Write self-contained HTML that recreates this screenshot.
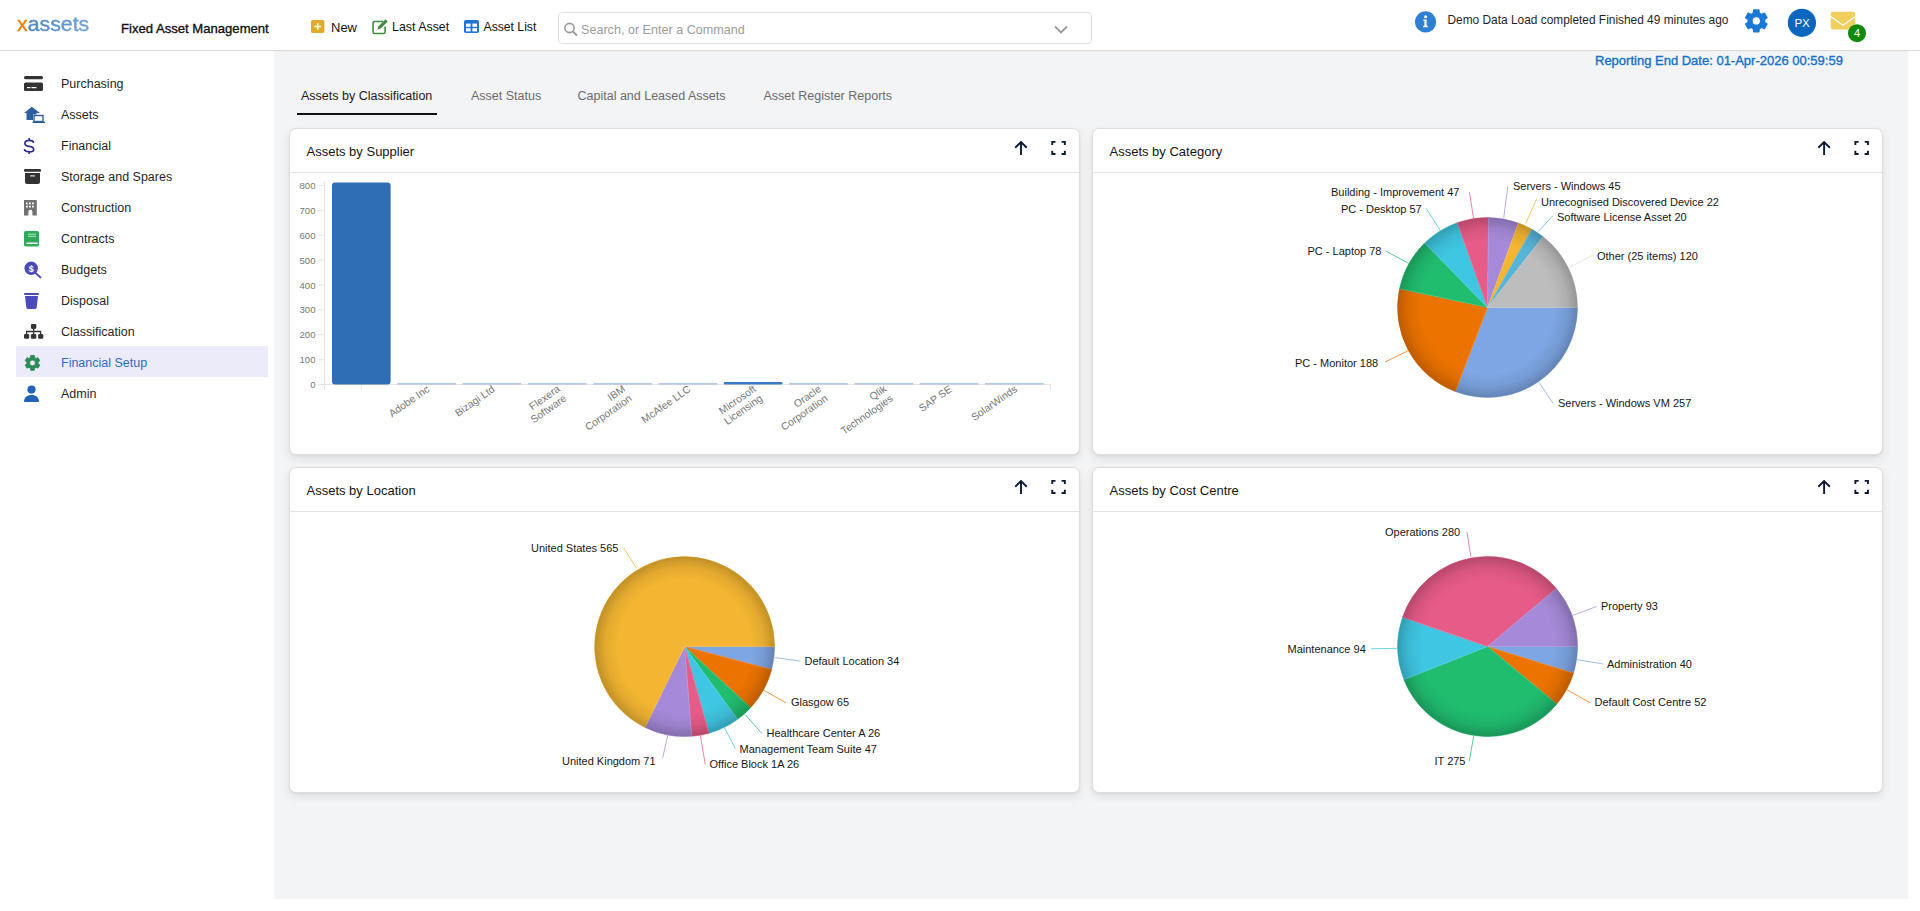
<!DOCTYPE html>
<html><head><meta charset="utf-8">
<style>
html,body{margin:0;padding:0;}
body{width:1920px;height:911px;overflow:hidden;position:relative;background:#fff;font-family:"Liberation Sans", sans-serif;}
.abs{position:absolute;white-space:nowrap;}
#hdr{position:absolute;left:0;top:0;width:1920px;height:50px;background:#fff;border-bottom:1px solid #dfdcd9;box-shadow:0 1px 1px rgba(0,0,0,0.02);z-index:2;}
#main{position:absolute;left:274px;top:51px;width:1634px;height:848px;background:#f3f4f6;}
.si{position:absolute;left:61px;height:20px;line-height:20px;font-size:12.5px;white-space:nowrap;}
.hl{position:absolute;left:16px;top:346px;width:252px;height:31px;background:#ecebfa;}
.panel{position:absolute;width:791px;background:#fff;border:1px solid #e0dedb;border-radius:7px;box-shadow:0 4px 10px rgba(0,0,0,0.09),0 1px 2px rgba(0,0,0,0.05);box-sizing:border-box;}
.ptitle{position:absolute;left:16.5px;top:14.5px;font-size:13px;color:#141414;white-space:nowrap;}
.psep{position:absolute;left:0;right:0;top:43px;height:1px;background:#e4e4e4;}
.tab{position:absolute;top:89px;font-size:12.5px;color:#6b6b6b;white-space:nowrap;}
svg text{font-family:"Liberation Sans", sans-serif;}
</style></head><body>
<div id="hdr">
 <div class="abs" style="left:16.5px;top:13px;font-size:20.2px;letter-spacing:0;transform:scaleX(1.055);transform-origin:0 0;"><span style="color:#ef7d00;-webkit-text-stroke:0.3px #ef7d00;">x</span><span style="background:linear-gradient(90deg,#4a84bd,#74a4e4);-webkit-background-clip:text;background-clip:text;color:transparent;-webkit-text-stroke:0.3px rgba(95,145,205,0.55);">assets</span></div>
 <div class="abs" style="left:121px;top:20.8px;font-size:13.1px;color:#111;-webkit-text-stroke:0.35px #111;">Fixed Asset Management</div>
 <div class="abs" style="left:331px;top:20px;font-size:13px;color:#111;">New</div>
 <div class="abs" style="left:392px;top:20px;font-size:12.4px;color:#111;">Last Asset</div>
 <div class="abs" style="left:483.5px;top:20px;font-size:12.2px;color:#111;">Asset List</div>
 <div class="abs" style="left:558px;top:12px;width:534px;height:32px;box-sizing:border-box;border:1px solid #dedede;border-radius:4px;"></div>
 <div class="abs" style="left:581px;top:23px;font-size:12.6px;color:#9c9c9c;">Search, or Enter a Command</div>
 <div class="abs" style="left:1447.5px;top:12.5px;font-size:11.9px;color:#1f1f1f;">Demo Data Load completed Finished 49 minutes ago</div>
</div>
<div id="main"></div>
<div class="hl"></div>
<div class="si" style="top:74px;color:#1f1f1f">Purchasing</div><div class="si" style="top:105px;color:#1f1f1f">Assets</div><div class="si" style="top:136px;color:#1f1f1f">Financial</div><div class="si" style="top:167px;color:#1f1f1f">Storage and Spares</div><div class="si" style="top:198px;color:#1f1f1f">Construction</div><div class="si" style="top:229px;color:#1f1f1f">Contracts</div><div class="si" style="top:260px;color:#1f1f1f">Budgets</div><div class="si" style="top:291px;color:#1f1f1f">Disposal</div><div class="si" style="top:322px;color:#1f1f1f">Classification</div><div class="si" style="top:353px;color:#2a6cc4">Financial Setup</div><div class="si" style="top:384px;color:#1f1f1f">Admin</div>
<div class="abs" style="left:1595px;top:53px;font-size:13px;color:#1170c8;-webkit-text-stroke:0.35px #1170c8;">Reporting End Date: 01-Apr-2026 00:59:59</div>
<div class="tab" style="left:301px;color:#1a1a1a;">Assets by Classification</div>
<div class="abs" style="left:297px;top:113px;width:140px;height:2px;background:#111;"></div>
<div class="tab" style="left:471px;">Asset Status</div>
<div class="tab" style="left:577.5px;">Capital and Leased Assets</div>
<div class="tab" style="left:763.5px;">Asset Register Reports</div>

<div class="panel" style="left:289px;top:128px;height:327px;"><div class="ptitle">Assets by Supplier</div><div class="psep"></div></div>
<div class="panel" style="left:1092px;top:128px;height:327px;"><div class="ptitle">Assets by Category</div><div class="psep"></div></div>
<div class="panel" style="left:289px;top:467px;height:326px;"><div class="ptitle">Assets by Location</div><div class="psep"></div></div>
<div class="panel" style="left:1092px;top:467px;height:326px;"><div class="ptitle">Assets by Cost Centre</div><div class="psep"></div></div>

<svg class="abs" style="left:0;top:0;z-index:3;" width="1920" height="911" viewBox="0 0 1920 911">
<rect x="24" y="76" width="19" height="3.2" rx="1.5" fill="#333"/><rect x="24" y="82.4" width="19" height="8.5" rx="1.5" fill="#333"/><rect x="27" y="87" width="3.5" height="1.2" fill="#fff"/><rect x="31.5" y="87" width="5" height="1.2" fill="#fff"/>
<path d="M24.1,113 L31.8,106.8 L39.9,113 L36.5,113 L36.5,114.5 L33,114.5 L33,120 L26.5,120 L26.5,113 Z" fill="#2c5ea0"/><rect x="34" y="115.5" width="9" height="6" fill="none" stroke="#2c5ea0" stroke-width="1.4"/><rect x="32.5" y="121.5" width="12.5" height="1.6" rx="0.6" fill="#2c5ea0"/>
<path d="M29.2,138 V140.6 M29.2,151.6 V154 M33.6,142.8 C33.4,141.2 31.6,140.4 29.2,140.4 C26.5,140.4 24.9,141.6 24.9,143.4 C24.9,145.3 26.7,145.9 29.2,146.3 C31.9,146.7 33.7,147.5 33.7,149.4 C33.7,151 32,151.8 29.2,151.8 C26.6,151.8 24.7,151 24.4,149.2" fill="none" stroke="#2b2b8e" stroke-width="1.7"/>
<rect x="24" y="169" width="17" height="2.8" rx="1" fill="#333"/><path d="M25,173 h15 v9 a2,2 0 0 1 -2,2 h-11 a2,2 0 0 1 -2,-2 z" fill="#333"/><rect x="30" y="175.3" width="5" height="1.2" rx="0.5" fill="#ddd"/>
<path d="M24,200 h12.8 v15.4 h-4.4 v-3.6 a2,2 0 0 0 -4,0 v3.6 h-4.4 z" fill="#717171"/><rect x="26" y="202.5" width="1.8" height="1.8" fill="#fff"/><rect x="26" y="205.7" width="1.8" height="1.8" fill="#fff"/><rect x="29" y="202.5" width="1.8" height="1.8" fill="#fff"/><rect x="29" y="205.7" width="1.8" height="1.8" fill="#fff"/><rect x="32" y="202.5" width="1.8" height="1.8" fill="#fff"/><rect x="32" y="205.7" width="1.8" height="1.8" fill="#fff"/>
<rect x="24" y="231" width="15" height="15.5" rx="1.8" fill="#2eaa5a"/><rect x="26.3" y="242.6" width="11.5" height="1.5" rx="0.7" fill="#fff"/><rect x="28" y="233.6" width="8" height="1.1" fill="#a8e0bc"/><rect x="28" y="235.8" width="8" height="1.1" fill="#a8e0bc"/>
<circle cx="31.2" cy="268.3" r="6.7" fill="#4b4bb8"/><line x1="35.5" y1="273" x2="40.5" y2="277.5" stroke="#4b4bb8" stroke-width="1.8" stroke-linecap="round"/><text x="31.2" y="271.5" font-size="9" font-weight="bold" fill="#fff" text-anchor="middle">$</text>
<rect x="24" y="292.9" width="15" height="2" rx="0.8" fill="#4b4bbd"/><path d="M25,296 h13 l-1.3,11.5 a1.6,1.6 0 0 1 -1.6,1.4 h-7.2 a1.6,1.6 0 0 1 -1.6,-1.4 z" fill="#4b4bbd"/>
<rect x="30.9" y="323.9" width="5.4" height="5" rx="1.3" fill="#333"/><path d="M33.6,328.5 v5.5 M26.6,334.5 v-3 h14 v3" stroke="#333" stroke-width="1.3" fill="none"/><rect x="24" y="334" width="5.2" height="4.8" rx="1.3" fill="#333"/><rect x="30.9" y="334" width="5.4" height="4.8" rx="1.3" fill="#333"/><rect x="38.1" y="334" width="5.2" height="4.8" rx="1.3" fill="#333"/>
<path d="M30.49,357.57 L30.69,355.52 L34.31,355.52 L34.51,357.57 L36.12,358.49 L37.99,357.64 L39.80,360.77 L38.12,361.97 L38.12,363.83 L39.80,365.03 L37.99,368.16 L36.12,367.31 L34.51,368.23 L34.31,370.28 L30.69,370.28 L30.49,368.23 L28.88,367.31 L27.01,368.16 L25.20,365.03 L26.88,363.83 L26.88,361.97 L25.20,360.77 L27.01,357.64 L28.88,358.49 Z M35.4,362.9 A2.9,2.9 0 1 0 29.6,362.9 A2.9,2.9 0 1 0 35.4,362.9 Z" fill="#2e8b57" stroke="#2e8b57" stroke-width="0.91" stroke-linejoin="round" fill-rule="evenodd"/>
<circle cx="31.5" cy="389.6" r="4.1" fill="#2463b8"/><path d="M24,402 C24,397.5 27,395 31.5,395 C36,395 39,397.5 39,402 z" fill="#2463b8"/>
<circle cx="1425.6" cy="21.9" r="10.6" fill="#2f80d2"/><circle cx="1425.6" cy="16.8" r="1.5" fill="#fff"/><path d="M1423.4,19.5 h3.2 v6.3 h1.2 v1.5 h-4.6 v-1.5 h1.2 v-4.8 h-1 z" fill="#fff"/><path d="M1753.38,13.13 L1753.64,10.02 L1758.96,10.02 L1759.22,13.13 L1761.57,14.48 L1764.39,13.15 L1767.05,17.77 L1764.49,19.55 L1764.49,22.25 L1767.05,24.03 L1764.39,28.65 L1761.57,27.32 L1759.22,28.67 L1758.96,31.78 L1753.64,31.78 L1753.38,28.67 L1751.03,27.32 L1748.21,28.65 L1745.55,24.03 L1748.11,22.25 L1748.11,19.55 L1745.55,17.77 L1748.21,13.15 L1751.03,14.48 Z M1760.6,20.9 A4.3,4.3 0 1 0 1752.0,20.9 A4.3,4.3 0 1 0 1760.6,20.9 Z" fill="#1b79d6" stroke="#1b79d6" stroke-width="1.34" stroke-linejoin="round" fill-rule="evenodd"/><circle cx="1801.9" cy="22.8" r="14.1" fill="#0a66bf"/><text x="1802" y="27.2" font-size="11.6" fill="#fff" text-anchor="middle" letter-spacing="-0.3">PX</text><path d="M1833,11.8 h20 a2.2,2.2 0 0 1 2.2,2.2 v13.3 a2.2,2.2 0 0 1 -2.2,2.2 h-20 a2.2,2.2 0 0 1 -2.2,-2.2 v-13.3 a2.2,2.2 0 0 1 2.2,-2.2 z" fill="#f0cf5e"/><path d="M1831,16.8 L1843,25.2 L1855,16.8" fill="none" stroke="#fff" stroke-width="1.3"/><circle cx="1857" cy="33.2" r="9" fill="#118a0b"/><text x="1857" y="37.3" font-size="11" fill="#fff" text-anchor="middle">4</text><rect x="311" y="20" width="13.4" height="13" rx="1.8" fill="#e2a92e"/><path d="M317.7,23.3 v6.4 M314.5,26.5 h6.4" stroke="#fff" stroke-width="1.5"/><path d="M383,21.5 h-8.3 a1.6,1.6 0 0 0 -1.6,1.6 v8.8 a1.6,1.6 0 0 0 1.6,1.6 h8.8 a1.6,1.6 0 0 0 1.6,-1.6 v-5.5" fill="none" stroke="#3f8c3f" stroke-width="1.6"/><path d="M377.5,29.5 l1,-3.2 l7,-7 l2.2,2.2 l-7,7 z" fill="#3f8c3f"/><rect x="464" y="20" width="15" height="13" rx="1.8" fill="#1f74d8"/><rect x="466" y="23.6" width="4.6" height="3.2" fill="#fff"/><rect x="472.4" y="23.6" width="4.6" height="3.2" fill="#fff"/><rect x="466" y="28.2" width="4.6" height="3.2" fill="#fff"/><rect x="472.4" y="28.2" width="4.6" height="3.2" fill="#fff"/><circle cx="569.5" cy="28" r="4.6" fill="none" stroke="#9a9a9a" stroke-width="1.6"/><line x1="572.8" y1="31.3" x2="577" y2="35.5" stroke="#9a9a9a" stroke-width="1.8"/><path d="M1055,26.5 L1061,32.5 L1067,26.5" fill="none" stroke="#9a9a9a" stroke-width="1.8"/>
<path d="M1015.2,147.70000000000002 L1021.0,142.1 L1026.8,147.70000000000002 M1021.0,142.4 V154.9" fill="none" stroke="#0b1a33" stroke-width="1.9"/><path d="M1052.25,145.1 V141.85 H1055.5 M1061.6,141.85 H1064.85 V145.1 M1064.85,150.70000000000002 V153.95000000000002 H1061.6 M1055.5,153.95000000000002 H1052.25 V150.70000000000002" fill="none" stroke="#0b1a33" stroke-width="1.9"/><path d="M1818.3000000000002,147.70000000000002 L1824.1000000000001,142.1 L1829.9,147.70000000000002 M1824.1000000000001,142.4 V154.9" fill="none" stroke="#0b1a33" stroke-width="1.9"/><path d="M1855.3500000000001,145.1 V141.85 H1858.6000000000001 M1864.7,141.85 H1867.95 V145.1 M1867.95,150.70000000000002 V153.95000000000002 H1864.7 M1858.6000000000001,153.95000000000002 H1855.3500000000001 V150.70000000000002" fill="none" stroke="#0b1a33" stroke-width="1.9"/><path d="M1015.2,486.7 L1021.0,481.09999999999997 L1026.8,486.7 M1021.0,481.4 V493.9" fill="none" stroke="#0b1a33" stroke-width="1.9"/><path d="M1052.25,484.09999999999997 V480.84999999999997 H1055.5 M1061.6,480.84999999999997 H1064.85 V484.09999999999997 M1064.85,489.7 V492.95 H1061.6 M1055.5,492.95 H1052.25 V489.7" fill="none" stroke="#0b1a33" stroke-width="1.9"/><path d="M1818.3000000000002,486.7 L1824.1000000000001,481.09999999999997 L1829.9,486.7 M1824.1000000000001,481.4 V493.9" fill="none" stroke="#0b1a33" stroke-width="1.9"/><path d="M1855.3500000000001,484.09999999999997 V480.84999999999997 H1858.6000000000001 M1864.7,480.84999999999997 H1867.95 V484.09999999999997 M1867.95,489.7 V492.95 H1864.7 M1858.6000000000001,492.95 H1855.3500000000001 V489.7" fill="none" stroke="#0b1a33" stroke-width="1.9"/>
<defs>
<radialGradient id="shade" cx="0.5" cy="0.5" r="0.5">
 <stop offset="0.74" stop-color="#000" stop-opacity="0"/>
 <stop offset="0.88" stop-color="#000" stop-opacity="0.07"/>
 <stop offset="1" stop-color="#000" stop-opacity="0.21"/>
</radialGradient>
</defs>
<path d="M1487.50,307.50 L1577.50,307.50 A90,90 0 0 1 1455.34,391.56 Z" fill="#7ea6e4" stroke="#7ea6e4" stroke-width="0.6"/>
<path d="M1487.50,307.50 L1455.34,391.56 A90,90 0 0 1 1399.50,288.66 Z" fill="#ec7300" stroke="#ec7300" stroke-width="0.6"/>
<path d="M1487.50,307.50 L1399.50,288.66 A90,90 0 0 1 1424.70,243.03 Z" fill="#20bd6f" stroke="#20bd6f" stroke-width="0.6"/>
<path d="M1487.50,307.50 L1424.70,243.03 A90,90 0 0 1 1457.25,222.74 Z" fill="#3fc6e2" stroke="#3fc6e2" stroke-width="0.6"/>
<path d="M1487.50,307.50 L1457.25,222.74 A90,90 0 0 1 1488.52,217.51 Z" fill="#e65b87" stroke="#e65b87" stroke-width="0.6"/>
<path d="M1487.50,307.50 L1488.52,217.51 A90,90 0 0 1 1518.39,222.97 Z" fill="#a68ad9" stroke="#a68ad9" stroke-width="0.6"/>
<path d="M1487.50,307.50 L1518.39,222.97 A90,90 0 0 1 1531.91,229.22 Z" fill="#f4b632" stroke="#f4b632" stroke-width="0.6"/>
<path d="M1487.50,307.50 L1531.91,229.22 A90,90 0 0 1 1543.16,236.77 Z" fill="#58b5d9" stroke="#58b5d9" stroke-width="0.6"/>
<path d="M1487.50,307.50 L1543.16,236.77 A90,90 0 0 1 1577.50,307.50 Z" fill="#bdbdbd" stroke="#bdbdbd" stroke-width="0.6"/>
<circle cx="1487.5" cy="307.5" r="90" fill="url(#shade)"/>
<line x1="1487.5" y1="307.5" x2="1577.50" y2="307.50" stroke="rgba(255,255,255,0.18)" stroke-width="0.7"/>
<line x1="1487.5" y1="307.5" x2="1455.34" y2="391.56" stroke="rgba(255,255,255,0.18)" stroke-width="0.7"/>
<line x1="1487.5" y1="307.5" x2="1399.50" y2="288.66" stroke="rgba(255,255,255,0.18)" stroke-width="0.7"/>
<line x1="1487.5" y1="307.5" x2="1424.70" y2="243.03" stroke="rgba(255,255,255,0.18)" stroke-width="0.7"/>
<line x1="1487.5" y1="307.5" x2="1457.25" y2="222.74" stroke="rgba(255,255,255,0.18)" stroke-width="0.7"/>
<line x1="1487.5" y1="307.5" x2="1488.52" y2="217.51" stroke="rgba(255,255,255,0.18)" stroke-width="0.7"/>
<line x1="1487.5" y1="307.5" x2="1518.39" y2="222.97" stroke="rgba(255,255,255,0.18)" stroke-width="0.7"/>
<line x1="1487.5" y1="307.5" x2="1531.91" y2="229.22" stroke="rgba(255,255,255,0.18)" stroke-width="0.7"/>
<line x1="1487.5" y1="307.5" x2="1543.16" y2="236.77" stroke="rgba(255,255,255,0.18)" stroke-width="0.7"/>
<line x1="1469.4" y1="192" x2="1473.5" y2="218" stroke="#e65b87" stroke-opacity="0.75" stroke-width="1"/>
<text x="1331" y="192" font-size="11" fill="#161616" text-anchor="start" dominant-baseline="central">Building - Improvement 47</text>
<line x1="1507.8" y1="186.5" x2="1503.7" y2="218" stroke="#a68ad9" stroke-opacity="0.75" stroke-width="1"/>
<text x="1513" y="186" font-size="11" fill="#161616" text-anchor="start" dominant-baseline="central">Servers - Windows 45</text>
<line x1="1536.7" y1="198.8" x2="1525.7" y2="223.5" stroke="#f4b632" stroke-opacity="0.75" stroke-width="1"/>
<text x="1541" y="202" font-size="11" fill="#161616" text-anchor="start" dominant-baseline="central">Unrecognised Discovered Device 22</text>
<line x1="1552.6" y1="216" x2="1538" y2="231.8" stroke="#58b5d9" stroke-opacity="0.75" stroke-width="1"/>
<text x="1557" y="217" font-size="11" fill="#161616" text-anchor="start" dominant-baseline="central">Software License Asset 20</text>
<line x1="1593" y1="255" x2="1569.6" y2="267.4" stroke="#e6e6e6" stroke-width="1"/>
<text x="1597" y="256" font-size="11" fill="#161616" text-anchor="start" dominant-baseline="central">Other (25 items) 120</text>
<line x1="1426.3" y1="208.4" x2="1440.6" y2="231" stroke="#3fc6e2" stroke-opacity="0.75" stroke-width="1"/>
<text x="1341" y="209" font-size="11" fill="#161616" text-anchor="start" dominant-baseline="central">PC - Desktop 57</text>
<line x1="1385.7" y1="251" x2="1408.5" y2="263.3" stroke="#20bd6f" stroke-opacity="0.75" stroke-width="1"/>
<text x="1307.5" y="251" font-size="11" fill="#161616" text-anchor="start" dominant-baseline="central">PC - Laptop 78</text>
<line x1="1385" y1="362" x2="1408.5" y2="350.6" stroke="#ec7300" stroke-opacity="0.75" stroke-width="1"/>
<text x="1295" y="363" font-size="11" fill="#161616" text-anchor="start" dominant-baseline="central">PC - Monitor 188</text>
<line x1="1553" y1="403.3" x2="1539.4" y2="382.7" stroke="#7ea6e4" stroke-opacity="0.75" stroke-width="1"/>
<text x="1558" y="403" font-size="11" fill="#161616" text-anchor="start" dominant-baseline="central">Servers - Windows VM 257</text>
<path d="M684.60,646.60 L774.60,646.60 A90,90 0 0 1 771.66,669.40 Z" fill="#7ea6e4" stroke="#7ea6e4" stroke-width="0.6"/>
<path d="M684.60,646.60 L771.66,669.40 A90,90 0 0 1 750.71,707.67 Z" fill="#ec7300" stroke="#ec7300" stroke-width="0.6"/>
<path d="M684.60,646.60 L750.71,707.67 A90,90 0 0 1 737.56,719.37 Z" fill="#20bd6f" stroke="#20bd6f" stroke-width="0.6"/>
<path d="M684.60,646.60 L737.56,719.37 A90,90 0 0 1 709.04,733.22 Z" fill="#3fc6e2" stroke="#3fc6e2" stroke-width="0.6"/>
<path d="M684.60,646.60 L709.04,733.22 A90,90 0 0 1 691.71,736.32 Z" fill="#e65b87" stroke="#e65b87" stroke-width="0.6"/>
<path d="M684.60,646.60 L691.71,736.32 A90,90 0 0 1 644.98,727.41 Z" fill="#a68ad9" stroke="#a68ad9" stroke-width="0.6"/>
<path d="M684.60,646.60 L644.98,727.41 A90,90 0 1 1 774.60,646.60 Z" fill="#f4b632" stroke="#f4b632" stroke-width="0.6"/>
<circle cx="684.6" cy="646.6" r="90" fill="url(#shade)"/>
<line x1="684.6" y1="646.6" x2="774.60" y2="646.60" stroke="rgba(255,255,255,0.18)" stroke-width="0.7"/>
<line x1="684.6" y1="646.6" x2="771.66" y2="669.40" stroke="rgba(255,255,255,0.18)" stroke-width="0.7"/>
<line x1="684.6" y1="646.6" x2="750.71" y2="707.67" stroke="rgba(255,255,255,0.18)" stroke-width="0.7"/>
<line x1="684.6" y1="646.6" x2="737.56" y2="719.37" stroke="rgba(255,255,255,0.18)" stroke-width="0.7"/>
<line x1="684.6" y1="646.6" x2="709.04" y2="733.22" stroke="rgba(255,255,255,0.18)" stroke-width="0.7"/>
<line x1="684.6" y1="646.6" x2="691.71" y2="736.32" stroke="rgba(255,255,255,0.18)" stroke-width="0.7"/>
<line x1="684.6" y1="646.6" x2="644.98" y2="727.41" stroke="rgba(255,255,255,0.18)" stroke-width="0.7"/>
<line x1="623.7" y1="547.8" x2="636.6" y2="568.4" stroke="#f4b632" stroke-opacity="0.75" stroke-width="1"/>
<text x="531" y="548" font-size="11" fill="#161616" text-anchor="start" dominant-baseline="central">United States 565</text>
<line x1="775" y1="657.6" x2="800" y2="661" stroke="#7ea6e4" stroke-opacity="0.75" stroke-width="1"/>
<text x="804.5" y="661" font-size="11" fill="#161616" text-anchor="start" dominant-baseline="central">Default Location 34</text>
<line x1="764.2" y1="690.5" x2="786" y2="702.8" stroke="#ec7300" stroke-opacity="0.75" stroke-width="1"/>
<text x="791" y="702" font-size="11" fill="#161616" text-anchor="start" dominant-baseline="central">Glasgow 65</text>
<line x1="745" y1="714.4" x2="762" y2="733.6" stroke="#20bd6f" stroke-opacity="0.75" stroke-width="1"/>
<text x="766.5" y="733" font-size="11" fill="#161616" text-anchor="start" dominant-baseline="central">Healthcare Center A 26</text>
<line x1="724.4" y1="727.5" x2="735.4" y2="748.7" stroke="#3fc6e2" stroke-opacity="0.75" stroke-width="1"/>
<text x="739.5" y="749" font-size="11" fill="#161616" text-anchor="start" dominant-baseline="central">Management Team Suite 47</text>
<line x1="700.2" y1="734.4" x2="705.2" y2="764" stroke="#e65b87" stroke-opacity="0.75" stroke-width="1"/>
<text x="709.5" y="764" font-size="11" fill="#161616" text-anchor="start" dominant-baseline="central">Office Block 1A 26</text>
<line x1="668" y1="734.4" x2="662.7" y2="757.7" stroke="#a68ad9" stroke-opacity="0.75" stroke-width="1"/>
<text x="562" y="761" font-size="11" fill="#161616" text-anchor="start" dominant-baseline="central">United Kingdom 71</text>
<path d="M1487.60,646.50 L1577.60,646.50 A90,90 0 0 1 1573.54,673.21 Z" fill="#7ea6e4" stroke="#7ea6e4" stroke-width="0.6"/>
<path d="M1487.60,646.50 L1573.54,673.21 A90,90 0 0 1 1556.83,704.00 Z" fill="#ec7300" stroke="#ec7300" stroke-width="0.6"/>
<path d="M1487.60,646.50 L1556.83,704.00 A90,90 0 0 1 1403.91,679.61 Z" fill="#20bd6f" stroke="#20bd6f" stroke-width="0.6"/>
<path d="M1487.60,646.50 L1403.91,679.61 A90,90 0 0 1 1402.50,617.21 Z" fill="#3fc6e2" stroke="#3fc6e2" stroke-width="0.6"/>
<path d="M1487.60,646.50 L1402.50,617.21 A90,90 0 0 1 1556.40,588.48 Z" fill="#e65b87" stroke="#e65b87" stroke-width="0.6"/>
<path d="M1487.60,646.50 L1556.40,588.48 A90,90 0 0 1 1577.60,646.50 Z" fill="#a68ad9" stroke="#a68ad9" stroke-width="0.6"/>
<circle cx="1487.6" cy="646.5" r="90" fill="url(#shade)"/>
<line x1="1487.6" y1="646.5" x2="1577.60" y2="646.50" stroke="rgba(255,255,255,0.18)" stroke-width="0.7"/>
<line x1="1487.6" y1="646.5" x2="1573.54" y2="673.21" stroke="rgba(255,255,255,0.18)" stroke-width="0.7"/>
<line x1="1487.6" y1="646.5" x2="1556.83" y2="704.00" stroke="rgba(255,255,255,0.18)" stroke-width="0.7"/>
<line x1="1487.6" y1="646.5" x2="1403.91" y2="679.61" stroke="rgba(255,255,255,0.18)" stroke-width="0.7"/>
<line x1="1487.6" y1="646.5" x2="1402.50" y2="617.21" stroke="rgba(255,255,255,0.18)" stroke-width="0.7"/>
<line x1="1487.6" y1="646.5" x2="1556.40" y2="588.48" stroke="rgba(255,255,255,0.18)" stroke-width="0.7"/>
<line x1="1467" y1="532" x2="1470.8" y2="556.6" stroke="#e65b87" stroke-opacity="0.75" stroke-width="1"/>
<text x="1385" y="532" font-size="11" fill="#161616" text-anchor="start" dominant-baseline="central">Operations 280</text>
<line x1="1596.4" y1="606.6" x2="1572.6" y2="615.4" stroke="#a68ad9" stroke-opacity="0.75" stroke-width="1"/>
<text x="1601" y="606" font-size="11" fill="#161616" text-anchor="start" dominant-baseline="central">Property 93</text>
<line x1="1603" y1="664" x2="1577" y2="659.6" stroke="#7ea6e4" stroke-opacity="0.75" stroke-width="1"/>
<text x="1607" y="664" font-size="11" fill="#161616" text-anchor="start" dominant-baseline="central">Administration 40</text>
<line x1="1590" y1="702.7" x2="1566.8" y2="689.6" stroke="#ec7300" stroke-opacity="0.75" stroke-width="1"/>
<text x="1594.5" y="702" font-size="11" fill="#161616" text-anchor="start" dominant-baseline="central">Default Cost Centre 52</text>
<line x1="1469.3" y1="760.9" x2="1473.7" y2="736" stroke="#20bd6f" stroke-opacity="0.75" stroke-width="1"/>
<text x="1434.5" y="761" font-size="11" fill="#161616" text-anchor="start" dominant-baseline="central">IT 275</text>
<line x1="1371.2" y1="648.8" x2="1397.4" y2="648.3" stroke="#3fc6e2" stroke-opacity="0.75" stroke-width="1"/>
<text x="1287.5" y="649" font-size="11" fill="#161616" text-anchor="start" dominant-baseline="central">Maintenance 94</text>
<text x="315.5" y="384.6" font-size="9.6" fill="#767676" text-anchor="end" dominant-baseline="central">0</text>
<line x1="318" y1="384.6" x2="324" y2="384.6" stroke="#e3e3e3" stroke-width="1"/>
<text x="315.5" y="359.7" font-size="9.6" fill="#767676" text-anchor="end" dominant-baseline="central">100</text>
<line x1="318" y1="359.7" x2="324" y2="359.7" stroke="#e3e3e3" stroke-width="1"/>
<text x="315.5" y="334.8" font-size="9.6" fill="#767676" text-anchor="end" dominant-baseline="central">200</text>
<line x1="318" y1="334.8" x2="324" y2="334.8" stroke="#e3e3e3" stroke-width="1"/>
<text x="315.5" y="309.9" font-size="9.6" fill="#767676" text-anchor="end" dominant-baseline="central">300</text>
<line x1="318" y1="309.9" x2="324" y2="309.9" stroke="#e3e3e3" stroke-width="1"/>
<text x="315.5" y="285.0" font-size="9.6" fill="#767676" text-anchor="end" dominant-baseline="central">400</text>
<line x1="318" y1="285.0" x2="324" y2="285.0" stroke="#e3e3e3" stroke-width="1"/>
<text x="315.5" y="260.1" font-size="9.6" fill="#767676" text-anchor="end" dominant-baseline="central">500</text>
<line x1="318" y1="260.1" x2="324" y2="260.1" stroke="#e3e3e3" stroke-width="1"/>
<text x="315.5" y="235.2" font-size="9.6" fill="#767676" text-anchor="end" dominant-baseline="central">600</text>
<line x1="318" y1="235.2" x2="324" y2="235.2" stroke="#e3e3e3" stroke-width="1"/>
<text x="315.5" y="210.3" font-size="9.6" fill="#767676" text-anchor="end" dominant-baseline="central">700</text>
<line x1="318" y1="210.3" x2="324" y2="210.3" stroke="#e3e3e3" stroke-width="1"/>
<text x="315.5" y="185.4" font-size="9.6" fill="#767676" text-anchor="end" dominant-baseline="central">800</text>
<line x1="318" y1="185.4" x2="324" y2="185.4" stroke="#e3e3e3" stroke-width="1"/>
<line x1="324.5" y1="182" x2="324.5" y2="390" stroke="#e3e3e3" stroke-width="1"/>
<line x1="318" y1="384.6" x2="1051" y2="384.6" stroke="#e3e3e3" stroke-width="1"/><line x1="1050.5" y1="385" x2="1050.5" y2="390" stroke="#e3e3e3" stroke-width="1"/>
<line x1="361.3" y1="385" x2="361.3" y2="390" stroke="#e3e3e3" stroke-width="1"/>
<rect x="332.0" y="182.4" width="58.6" height="202.2" rx="3" fill="#2f6eb5"/>
<line x1="426.6" y1="385" x2="426.6" y2="390" stroke="#e3e3e3" stroke-width="1"/>
<rect x="397.3" y="383.1" width="58.6" height="1.5" fill="#a9c2e6"/>
<text transform="translate(426.1,384.8) rotate(-35)" font-size="10.4" fill="#767676" text-anchor="end" dominant-baseline="hanging">Adobe Inc</text>
<line x1="491.9" y1="385" x2="491.9" y2="390" stroke="#e3e3e3" stroke-width="1"/>
<rect x="462.6" y="383.1" width="58.6" height="1.5" fill="#a9c2e6"/>
<text transform="translate(491.4,384.8) rotate(-35)" font-size="10.4" fill="#767676" text-anchor="end" dominant-baseline="hanging">Bizagi Ltd</text>
<line x1="557.2" y1="385" x2="557.2" y2="390" stroke="#e3e3e3" stroke-width="1"/>
<rect x="527.9" y="383.1" width="58.6" height="1.5" fill="#a9c2e6"/>
<text transform="translate(556.7,384.8) rotate(-35)" font-size="10.4" fill="#767676" text-anchor="end" dominant-baseline="hanging"><tspan x="0" y="0">Flexera</tspan><tspan x="0" y="11.5">Software</tspan></text>
<line x1="622.5" y1="385" x2="622.5" y2="390" stroke="#e3e3e3" stroke-width="1"/>
<rect x="593.2" y="383.1" width="58.6" height="1.5" fill="#a9c2e6"/>
<text transform="translate(622.0,384.8) rotate(-35)" font-size="10.4" fill="#767676" text-anchor="end" dominant-baseline="hanging"><tspan x="0" y="0">IBM</tspan><tspan x="0" y="11.5">Corporation</tspan></text>
<line x1="687.8" y1="385" x2="687.8" y2="390" stroke="#e3e3e3" stroke-width="1"/>
<rect x="658.5" y="383.1" width="58.6" height="1.5" fill="#a9c2e6"/>
<text transform="translate(687.3,384.8) rotate(-35)" font-size="10.4" fill="#767676" text-anchor="end" dominant-baseline="hanging">McAfee LLC</text>
<line x1="753.1" y1="385" x2="753.1" y2="390" stroke="#e3e3e3" stroke-width="1"/>
<rect x="723.8" y="382.0" width="58.6" height="2.4" rx="1.2" fill="#3b7bc6"/>
<text transform="translate(752.6,384.8) rotate(-35)" font-size="10.4" fill="#767676" text-anchor="end" dominant-baseline="hanging"><tspan x="0" y="0">Microsoft</tspan><tspan x="0" y="11.5">Licensing</tspan></text>
<line x1="818.4" y1="385" x2="818.4" y2="390" stroke="#e3e3e3" stroke-width="1"/>
<rect x="789.1" y="383.1" width="58.6" height="1.5" fill="#a9c2e6"/>
<text transform="translate(817.9,384.8) rotate(-35)" font-size="10.4" fill="#767676" text-anchor="end" dominant-baseline="hanging"><tspan x="0" y="0">Oracle</tspan><tspan x="0" y="11.5">Corporation</tspan></text>
<line x1="883.7" y1="385" x2="883.7" y2="390" stroke="#e3e3e3" stroke-width="1"/>
<rect x="854.4" y="383.1" width="58.6" height="1.5" fill="#a9c2e6"/>
<text transform="translate(883.2,384.8) rotate(-35)" font-size="10.4" fill="#767676" text-anchor="end" dominant-baseline="hanging"><tspan x="0" y="0">Qlik</tspan><tspan x="0" y="11.5">Technologies</tspan></text>
<line x1="949.0" y1="385" x2="949.0" y2="390" stroke="#e3e3e3" stroke-width="1"/>
<rect x="919.7" y="383.1" width="58.6" height="1.5" fill="#a9c2e6"/>
<text transform="translate(948.5,384.8) rotate(-35)" font-size="10.4" fill="#767676" text-anchor="end" dominant-baseline="hanging">SAP SE</text>
<line x1="1014.3" y1="385" x2="1014.3" y2="390" stroke="#e3e3e3" stroke-width="1"/>
<rect x="985.0" y="383.1" width="58.6" height="1.5" fill="#a9c2e6"/>
<text transform="translate(1013.8,384.8) rotate(-35)" font-size="10.4" fill="#767676" text-anchor="end" dominant-baseline="hanging">SolarWinds</text>
</svg>
</body></html>
